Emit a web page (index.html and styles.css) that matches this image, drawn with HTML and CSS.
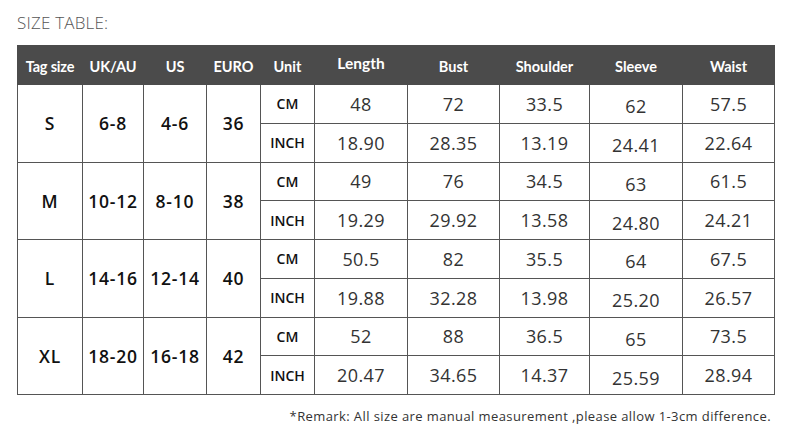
FILE: index.html
```html
<!DOCTYPE html>
<html>
<head>
<meta charset="utf-8">
<link rel="stylesheet" href="styles.css">
</head>
<body>
<div class="page">
  <h1 class="title">SIZE TABLE:</h1>
  <table class="size-table">
    <colgroup>
      <col class="c-tag"><col class="c-uk"><col class="c-us"><col class="c-eu"><col class="c-unit">
      <col class="c-len"><col class="c-bust"><col class="c-sh"><col class="c-sl"><col class="c-wa">
    </colgroup>
    <thead>
      <tr>
        <th class="small">Tag size</th><th>UK/AU</th><th>US</th><th>EURO</th><th>Unit</th>
        <th class="big">Length</th><th>Bust</th><th>Shoulder</th><th>Sleeve</th><th>Waist</th>
      </tr>
    </thead>
    <tbody>
      <tr>
        <td rowspan="2" class="key">S</td><td rowspan="2" class="key">6-8</td><td rowspan="2" class="key">4-6</td><td rowspan="2" class="key">36</td>
        <td class="unit">CM</td><td class="num">48</td><td class="num">72</td><td class="num">33.5</td><td class="num low">62</td><td class="num">57.5</td>
      </tr>
      <tr>
        <td class="unit">INCH</td><td class="num">18.90</td><td class="num">28.35</td><td class="num">13.19</td><td class="num low">24.41</td><td class="num">22.64</td>
      </tr>
      <tr>
        <td rowspan="2" class="key">M</td><td rowspan="2" class="key">10-12</td><td rowspan="2" class="key">8-10</td><td rowspan="2" class="key">38</td>
        <td class="unit">CM</td><td class="num">49</td><td class="num">76</td><td class="num">34.5</td><td class="num low">63</td><td class="num">61.5</td>
      </tr>
      <tr>
        <td class="unit">INCH</td><td class="num">19.29</td><td class="num">29.92</td><td class="num">13.58</td><td class="num low">24.80</td><td class="num">24.21</td>
      </tr>
      <tr>
        <td rowspan="2" class="key">L</td><td rowspan="2" class="key">14-16</td><td rowspan="2" class="key">12-14</td><td rowspan="2" class="key">40</td>
        <td class="unit">CM</td><td class="num">50.5</td><td class="num">82</td><td class="num">35.5</td><td class="num low">64</td><td class="num">67.5</td>
      </tr>
      <tr>
        <td class="unit">INCH</td><td class="num">19.88</td><td class="num">32.28</td><td class="num">13.98</td><td class="num low">25.20</td><td class="num">26.57</td>
      </tr>
      <tr>
        <td rowspan="2" class="key">XL</td><td rowspan="2" class="key">18-20</td><td rowspan="2" class="key">16-18</td><td rowspan="2" class="key">42</td>
        <td class="unit">CM</td><td class="num">52</td><td class="num">88</td><td class="num">36.5</td><td class="num low">65</td><td class="num">73.5</td>
      </tr>
      <tr>
        <td class="unit">INCH</td><td class="num">20.47</td><td class="num">34.65</td><td class="num">14.37</td><td class="num low">25.59</td><td class="num">28.94</td>
      </tr>
    </tbody>
  </table>
  <p class="remark">*Remark: All size are manual measurement ,please allow 1-3cm difference.</p>
</div>
</body>
</html>
```

FILE: styles.css
```css
html, body {
  margin: 0;
  padding: 0;
  background: #fff;
}

.page {
  width: 792px;
  height: 438px;
  padding: 13px 18px 0 17px;
  box-sizing: border-box;
  font-family: "Open Sans", "DejaVu Sans", sans-serif;
  color: #333;
}

.title {
  margin: 0 0 13px 0;
  font-size: 17px;
  line-height: 19px;
  font-weight: 300;
  color: #555;
  letter-spacing: 0.2px;
}

.size-table {
  border-collapse: collapse;
  table-layout: fixed;
  width: 757px;
}

.c-tag { width: 65px; }
.c-uk { width: 61px; }
.c-us { width: 63px; }
.c-eu { width: 54px; }
.c-unit { width: 54px; }
.c-len { width: 93px; }
.c-bust { width: 92px; }
.c-sh { width: 90px; }
.c-sl { width: 93px; }
.c-wa { width: 92px; }

.size-table thead tr { height: 39px; }
.size-table tbody tr { height: 38.75px; }

.size-table th {
  background: #4b4b4b;
  color: #fff;
  font-family: "Lato", "Open Sans", sans-serif;
  font-weight: 700;
  font-size: 14.5px;
  padding: 3px 0 0 0;
  border: 1px solid #4b4b4b;
  border-left: 1px solid #8a8a8a;
  text-align: center;
  vertical-align: middle;
}

.size-table th:first-child { border-left-color: #4b4b4b; }
.size-table th.small { font-size: 14.5px; letter-spacing: -0.2px; }
.size-table th.big { font-size: 15.5px; padding: 0 0 4px 0; }

.size-table td {
  border: 1px solid #555;
  padding: 0;
  text-align: center;
  vertical-align: middle;
}

.key {
  font-family: "Open Sans", sans-serif;
  font-weight: 600;
  font-size: 17.5px;
  letter-spacing: 0.8px;
  color: #111;
}

.unit {
  font-family: "Open Sans", sans-serif;
  font-weight: 600;
  font-size: 14px;
  color: #111;
}

.num {
  font-family: "Open Sans", sans-serif;
  font-weight: 400;
  font-size: 18px;
  letter-spacing: 0.4px;
  color: #333;
}

.size-table td.num.low { padding-top: 5px; }

.remark {
  margin: 12px 3px 0 0;
  text-align: right;
  font-family: "Open Sans", sans-serif;
  font-size: 13px;
  letter-spacing: 0.4px;
  color: #333;
}
```
